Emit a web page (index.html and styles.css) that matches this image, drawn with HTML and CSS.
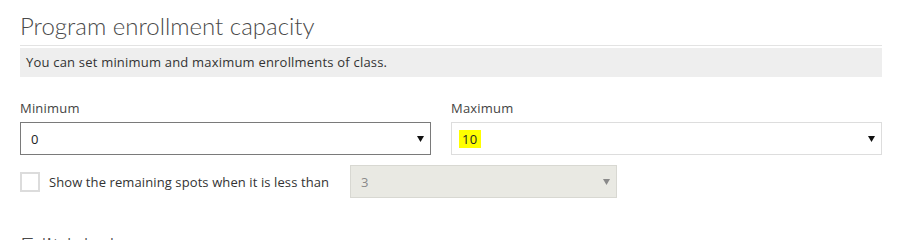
FILE: index.html
```html
<!DOCTYPE html>
<html lang="en">
<head>
<meta charset="utf-8">
<title>Program enrollment capacity</title>
<link rel="stylesheet" href="styles.css">
</head>
<body>
<div class="page">
  <h2 class="section-title">Program enrollment capacity</h2>
  <div class="info">You can set minimum and maximum enrollments of class.</div>

  <div class="fields">
    <div class="field">
      <div class="field-label">Minimum</div>
      <div class="select select-focus">
        <span class="select-value">0</span>
        <svg class="arrow" width="7" height="6" viewBox="0 0 7 6"><polygon points="0,0 7,0 3.5,6" fill="#111"/></svg>
      </div>
    </div>
    <div class="field">
      <div class="field-label">Maximum</div>
      <div class="select">
        <span class="select-value"><span class="hl">10</span></span>
        <svg class="arrow" width="7" height="6" viewBox="0 0 7 6"><polygon points="0,0 7,0 3.5,6" fill="#111"/></svg>
      </div>
    </div>
  </div>

  <div class="remaining">
    <span class="checkbox"></span>
    <span class="remaining-label">Show the remaining spots when it is less than</span>
    <div class="select select-disabled">
      <span class="select-value">3</span>
      <svg class="arrow" width="7" height="6" viewBox="0 0 7 6"><polygon points="0,0 7,0 3.5,6" fill="#8a8a8a"/></svg>
    </div>
  </div>

  <h2 class="section-title next-title">Edit labels</h2>
</div>
</body>
</html>
```

FILE: styles.css
```css
html, body {
  margin: 0;
  padding: 0;
  background: #ffffff;
}

body {
  font-family: "Open Sans", "Noto Sans", "Liberation Sans", sans-serif;
  font-size: 13px;
  letter-spacing: 0.2px;
  color: #333;
  overflow: hidden;
}

.page {
  width: 862px;
  padding: 0 20px;
}

.section-title {
  margin: 0;
  font-family: "Lato", "Open Sans", sans-serif;
  font-weight: 300;
  font-size: 24px;
  letter-spacing: 0;
  line-height: 28px;
  color: #4a4a4a;
  padding-top: 12px;
  padding-bottom: 5px;
  border-bottom: 1px solid #e3e3e3;
}

.info {
  margin-top: 2px;
  height: 29px;
  line-height: 29px;
  background: #eeeeee;
  padding-left: 6px;
  color: #333;
}

.fields {
  display: grid;
  grid-template-columns: 411px 431px;
  column-gap: 20px;
  margin-top: 22px;
}

.field-label {
  line-height: 18px;
  color: #444;
  margin-bottom: 5px;
}

.select {
  box-sizing: border-box;
  height: 33px;
  border: 1px solid #dddddd;
  background: #fff;
  display: flex;
  align-items: center;
  justify-content: space-between;
  padding: 0 6px 0 10px;
  color: #222;
}

.select-focus {
  border-color: #7a7a7a;
}

.select-value {
  line-height: 18px;
}

.hl {
  background: #ffff00;
  padding: 1px 4px 0 3px;
  margin-left: -3px;
  display: inline-block;
  line-height: 17px;
}

.arrow {
  display: block;
  margin-top: 1px;
}

.remaining {
  display: flex;
  align-items: center;
  margin-top: 10px;
}

.checkbox {
  box-sizing: border-box;
  width: 20px;
  height: 20px;
  border: 2px solid #dcdcdc;
  background: #fff;
  flex: none;
}

.remaining-label {
  margin-left: 9px;
  width: 301px;
  flex: none;
  letter-spacing: 0.1px;
  color: #333;
}

.select-disabled {
  width: 267px;
  background: #e9e9e3;
  border-color: #d8d8d2;
  color: #8a8a8a;
}

.next-title {
  border-bottom: none;
  margin-top: 22px;
}
```
